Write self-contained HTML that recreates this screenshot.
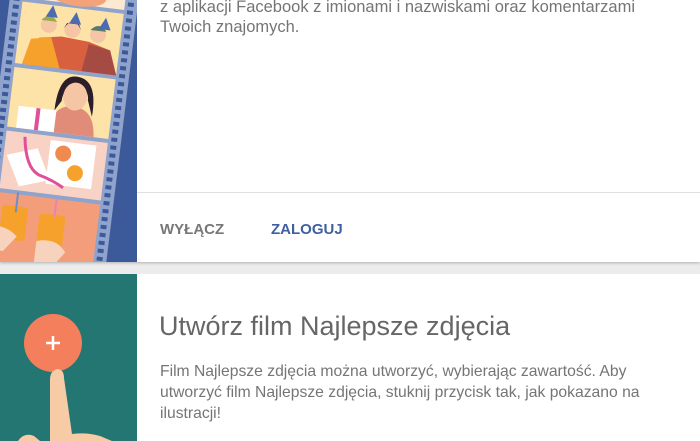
<!DOCTYPE html>
<html><head><meta charset="utf-8"><style>
html,body{margin:0;padding:0;width:700px;height:441px;overflow:hidden;background:#ececec;font-family:"Liberation Sans",sans-serif;}
.abs{position:absolute}
.t{color:#757575;white-space:nowrap}
</style></head><body>
<div class="abs" style="left:0;top:0;width:700px;height:262px;background:#fff;box-shadow:0 1px 3px rgba(0,0,0,.25)"></div>
<svg class="abs" style="left:0;top:0" width="137" height="262" viewBox="0 0 137 262">
<rect width="137" height="262" fill="#3c5a9a"/>
<g transform="rotate(7 68 131)">
<rect x="-6" y="-20" width="128" height="300" fill="#8fa3cc"/>
<g fill="#3c5a9a">
<rect x="-2" y="-20" width="6" height="4"/><rect x="-2" y="-12" width="6" height="4"/><rect x="-2" y="-4" width="6" height="4"/><rect x="-2" y="4" width="6" height="4"/><rect x="-2" y="12" width="6" height="4"/><rect x="-2" y="20" width="6" height="4"/><rect x="-2" y="28" width="6" height="4"/><rect x="-2" y="36" width="6" height="4"/><rect x="-2" y="44" width="6" height="4"/><rect x="-2" y="52" width="6" height="4"/><rect x="-2" y="60" width="6" height="4"/><rect x="-2" y="68" width="6" height="4"/><rect x="-2" y="76" width="6" height="4"/><rect x="-2" y="84" width="6" height="4"/><rect x="-2" y="92" width="6" height="4"/><rect x="-2" y="100" width="6" height="4"/><rect x="-2" y="108" width="6" height="4"/><rect x="-2" y="116" width="6" height="4"/><rect x="-2" y="124" width="6" height="4"/><rect x="-2" y="132" width="6" height="4"/><rect x="-2" y="140" width="6" height="4"/><rect x="-2" y="148" width="6" height="4"/><rect x="-2" y="156" width="6" height="4"/><rect x="-2" y="164" width="6" height="4"/><rect x="-2" y="172" width="6" height="4"/><rect x="-2" y="180" width="6" height="4"/><rect x="-2" y="188" width="6" height="4"/><rect x="-2" y="196" width="6" height="4"/><rect x="-2" y="204" width="6" height="4"/><rect x="-2" y="212" width="6" height="4"/><rect x="-2" y="220" width="6" height="4"/><rect x="-2" y="228" width="6" height="4"/><rect x="-2" y="236" width="6" height="4"/><rect x="-2" y="244" width="6" height="4"/><rect x="-2" y="252" width="6" height="4"/><rect x="-2" y="260" width="6" height="4"/><rect x="-2" y="268" width="6" height="4"/>
</g>
<g fill="#3c5a9a" transform="translate(110 0)">
<rect x="2" y="-20" width="6" height="4"/><rect x="2" y="-12" width="6" height="4"/><rect x="2" y="-4" width="6" height="4"/><rect x="2" y="4" width="6" height="4"/><rect x="2" y="12" width="6" height="4"/><rect x="2" y="20" width="6" height="4"/><rect x="2" y="28" width="6" height="4"/><rect x="2" y="36" width="6" height="4"/><rect x="2" y="44" width="6" height="4"/><rect x="2" y="52" width="6" height="4"/><rect x="2" y="60" width="6" height="4"/><rect x="2" y="68" width="6" height="4"/><rect x="2" y="76" width="6" height="4"/><rect x="2" y="84" width="6" height="4"/><rect x="2" y="92" width="6" height="4"/><rect x="2" y="100" width="6" height="4"/><rect x="2" y="108" width="6" height="4"/><rect x="2" y="116" width="6" height="4"/><rect x="2" y="124" width="6" height="4"/><rect x="2" y="132" width="6" height="4"/><rect x="2" y="140" width="6" height="4"/><rect x="2" y="148" width="6" height="4"/><rect x="2" y="156" width="6" height="4"/><rect x="2" y="164" width="6" height="4"/><rect x="2" y="172" width="6" height="4"/><rect x="2" y="180" width="6" height="4"/><rect x="2" y="188" width="6" height="4"/><rect x="2" y="196" width="6" height="4"/><rect x="2" y="204" width="6" height="4"/><rect x="2" y="212" width="6" height="4"/><rect x="2" y="220" width="6" height="4"/><rect x="2" y="228" width="6" height="4"/><rect x="2" y="236" width="6" height="4"/><rect x="2" y="244" width="6" height="4"/><rect x="2" y="252" width="6" height="4"/><rect x="2" y="260" width="6" height="4"/><rect x="2" y="268" width="6" height="4"/>
</g>
<rect x="7" y="-20" width="102" height="24" fill="#fbe9d2"/>
<ellipse cx="62" cy="-4" rx="28" ry="10" fill="#f3a27a"/>
<rect x="7" y="8" width="102" height="62" fill="#fde3a7"/>
<path d="M22 70 L28 42 L50 38 L78 40 L100 46 L109 70Z" fill="#d9603e"/>
<path d="M14 70 L20 44 L40 40 L52 70Z" fill="#f6a12b"/>
<path d="M74 70 L78 42 L100 46 L109 70Z" fill="#a64b44"/>
<circle cx="36" cy="28" r="8" fill="#f4c6a5"/><circle cx="60" cy="30" r="8" fill="#f4c6a5"/><circle cx="86" cy="32" r="8" fill="#f4c6a5"/>
<path d="M51 30 Q60 14 69 30 L66 24 L54 24Z" fill="#2b1e2a"/>
<path d="M28 24 Q36 14 44 24Z" fill="#9da848"/><path d="M78 28 Q86 18 94 28Z" fill="#5d7a66"/>
<path d="M38 8 L44 20 L32 20Z" fill="#4d6cb0"/><path d="M62 12 L68 24 L56 24Z" fill="#4d6cb0"/><path d="M92 14 L98 26 L86 26Z" fill="#4d6cb0"/>
<rect x="7" y="74" width="102" height="60" fill="#fde3a7"/>
<path d="M48 134 Q50 106 70 106 Q92 106 94 134Z" fill="#e08c78"/>
<path d="M52 112 Q52 76 70 76 Q92 76 90 114 L84 98 Q84 86 70 86 Q58 88 58 102Z" fill="#2b1e2a"/>
<ellipse cx="71" cy="96" rx="12" ry="14" fill="#f4c6a5"/>
<rect x="16" y="112" width="38" height="22" fill="#fff"/><rect x="34" y="112" width="4" height="22" fill="#e0509a"/>
<rect x="7" y="138" width="102" height="58" fill="#f8d2c4"/>
<rect x="52" y="142" width="46" height="44" fill="#fff"/>
<circle cx="66" cy="154" r="8" fill="#f08a4e"/><circle cx="80" cy="172" r="8" fill="#f6a12b"/>
<path d="M10 162 L40 152 L56 182 L26 192Z" fill="#fff"/>
<path d="M26 142 Q30 172 44 178 Q60 182 70 188" stroke="#e0509a" stroke-width="3" fill="none"/>
<rect x="7" y="200" width="102" height="80" fill="#f39d7a"/>
<rect x="12" y="212" width="26" height="34" rx="3" fill="#f6a12b"/><rect x="50" y="216" width="26" height="34" rx="3" fill="#f6a12b"/>
<rect x="25" y="198" width="2" height="20" fill="#6a8fc8"/><rect x="64" y="200" width="2" height="18" fill="#f080b0"/>
<path d="M-6 238 Q14 228 30 242 L18 258 L-6 258Z" fill="#f7d2bd"/><path d="M50 244 Q70 238 80 252 L70 266 L50 266Z" fill="#f7d2bd"/>
</g>
</svg>
<div class="abs t" style="left:160px;top:-3px;line-height:20px;font-size:16.5px">z aplikacji Facebook z imionami i nazwiskami oraz komentarzami<br>Twoich znajomych.</div>
<div class="abs" style="left:137px;top:192px;width:563px;height:1px;background:#e0e0e0"></div>
<div class="abs" style="left:160px;top:221px;font-size:15px;font-weight:bold;color:#777">WYŁĄCZ</div>
<div class="abs" style="left:271px;top:221px;font-size:15px;font-weight:bold;color:#3f5fa0">ZALOGUJ</div>
<div class="abs" style="left:0;top:274px;width:700px;height:167px;background:#fff"></div>
<svg class="abs" style="left:0;top:274px" width="137" height="167" viewBox="0 0 137 167">
<rect width="137" height="167" fill="#237671"/>
<circle cx="53" cy="69" r="29" fill="#f47f5d"/>
<path d="M53 62v14M46 69h14" stroke="#fff" stroke-width="2.5"/>
<path d="M50 167 L50 106 Q50 96 58 95 Q64 96 64 104 L72 160 Q86 158 100 162 L112 167Z" fill="#f6cba6"/>
<path d="M18 167 Q24 158 34 162 L40 167Z" fill="#f6cba6"/>
</svg>
<div class="abs" style="left:159px;top:311px;font-size:27px;color:#666;white-space:nowrap">Utwórz film Najlepsze zdjęcia</div>
<div class="abs t" style="left:160px;top:361px;line-height:21px;font-size:15.7px">Film Najlepsze zdjęcia można utworzyć, wybierając zawartość. Aby<br>utworzyć film Najlepsze zdjęcia, stuknij przycisk tak, jak pokazano na<br>ilustracji!</div>
</body></html>
